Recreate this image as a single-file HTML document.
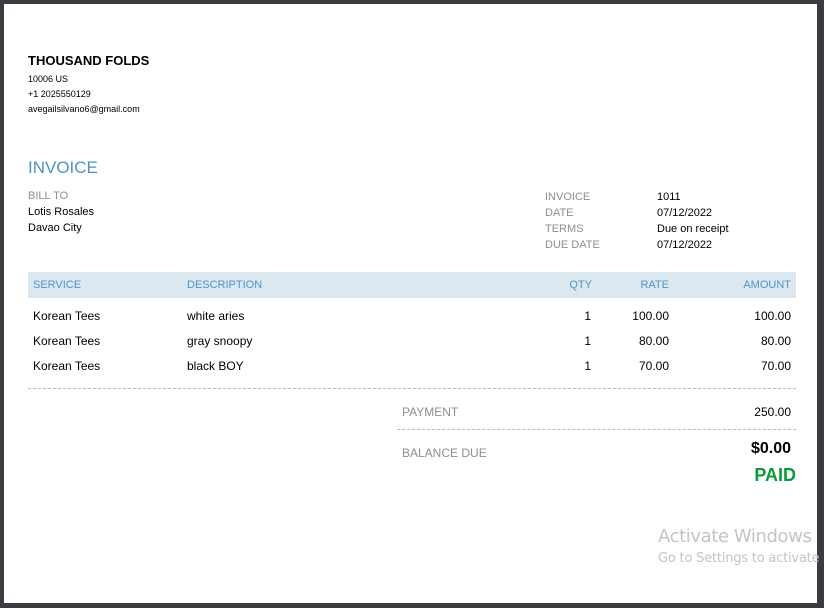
<!DOCTYPE html>
<html><head><style>
*{margin:0;padding:0;box-sizing:border-box}
body{width:824px;height:608px;background:#3b3c41;position:relative;overflow:hidden;font-family:"Liberation Sans",Arial,sans-serif;color:#000}
#pg{position:absolute;left:4px;top:4px;width:813px;height:599px;background:#fff}
.a{position:absolute;white-space:nowrap}
.g{color:#8e8e96}
.s{font-size:12px}
.r{text-align:right}
.hd{color:#4f93c4;font-size:12px}
.dash{position:absolute;height:0;border-top:1px dashed #bbb}
</style></head><body>
<div id="pg"></div>
<div class="a" style="left:28px;top:53px;font-size:13px;font-weight:bold">THOUSAND FOLDS</div>
<div class="a" style="left:28px;top:74px;font-size:9px">10006 US</div>
<div class="a" style="left:28px;top:89px;font-size:9px">+1 2025550129</div>
<div class="a" style="left:28px;top:104px;font-size:9px">avegailsilvano6@gmail.com</div>
<div class="a" style="left:28px;top:158px;font-size:17px;color:#4f93c4">INVOICE</div>
<div class="a g" style="left:28px;top:190px;font-size:11px">BILL TO</div>
<div class="a" style="left:28px;top:206px;font-size:11px">Lotis Rosales</div>
<div class="a" style="left:28px;top:222px;font-size:11px">Davao City</div>
<div class="a g" style="left:545px;top:189px;font-size:11px;line-height:16px">INVOICE<br>DATE<br>TERMS<br>DUE DATE</div>
<div class="a" style="left:657px;top:189px;font-size:11px;line-height:16px">1011<br>07/12/2022<br>Due on receipt<br>07/12/2022</div>
<div class="a" style="left:28px;top:272px;width:768px;height:26px;background:#dce8f0"></div>
<div class="a hd" style="left:33px;top:279px;font-size:11px">SERVICE</div>
<div class="a hd" style="left:187px;top:279px;font-size:11px">DESCRIPTION</div>
<div class="a hd r" style="left:540px;width:52px;top:279px;font-size:11px">QTY</div>
<div class="a hd r" style="left:600px;width:69px;top:279px;font-size:11px">RATE</div>
<div class="a hd r" style="left:700px;width:91px;top:279px;font-size:11px">AMOUNT</div>
<div class="a s" style="left:33px;top:304px;line-height:25px">Korean Tees<br>Korean Tees<br>Korean Tees</div>
<div class="a s" style="left:187px;top:304px;line-height:25px">white aries<br>gray snoopy<br>black BOY</div>
<div class="a s r" style="left:540px;width:51px;top:304px;line-height:25px">1<br>1<br>1</div>
<div class="a s r" style="left:600px;width:69px;top:304px;line-height:25px">100.00<br>80.00<br>70.00</div>
<div class="a s r" style="left:700px;width:91px;top:304px;line-height:25px">100.00<br>80.00<br>70.00</div>
<div class="dash" style="left:28px;width:768px;top:388px"></div>
<div class="a g" style="left:402px;top:405px;font-size:12px">PAYMENT</div>
<div class="a s r" style="left:700px;width:91px;top:405px">250.00</div>
<div class="dash" style="left:397px;width:399px;top:429px"></div>
<div class="a g" style="left:402px;top:446px;font-size:12px">BALANCE DUE</div>
<div class="a r" style="left:700px;width:91px;top:440px;font-size:16px;font-weight:bold">$0.00</div>
<div class="a r" style="left:700px;width:96px;top:465px;font-size:18px;font-weight:bold;color:#0a9a3c">PAID</div>
<div class="a" style="left:817px;top:0;width:7px;height:608px;background:#3b3c41"></div>
<div class="a" style="left:658px;top:526px;font-size:18px;color:#c4c4c4;font-family:'DejaVu Sans',sans-serif;letter-spacing:-0.4px">Activate Windows</div>
<div class="a" style="left:658px;top:551px;font-size:13px;color:#c4c4c4;font-family:'DejaVu Sans',sans-serif;letter-spacing:-0.2px">Go to Settings to activate</div>
</body></html>
